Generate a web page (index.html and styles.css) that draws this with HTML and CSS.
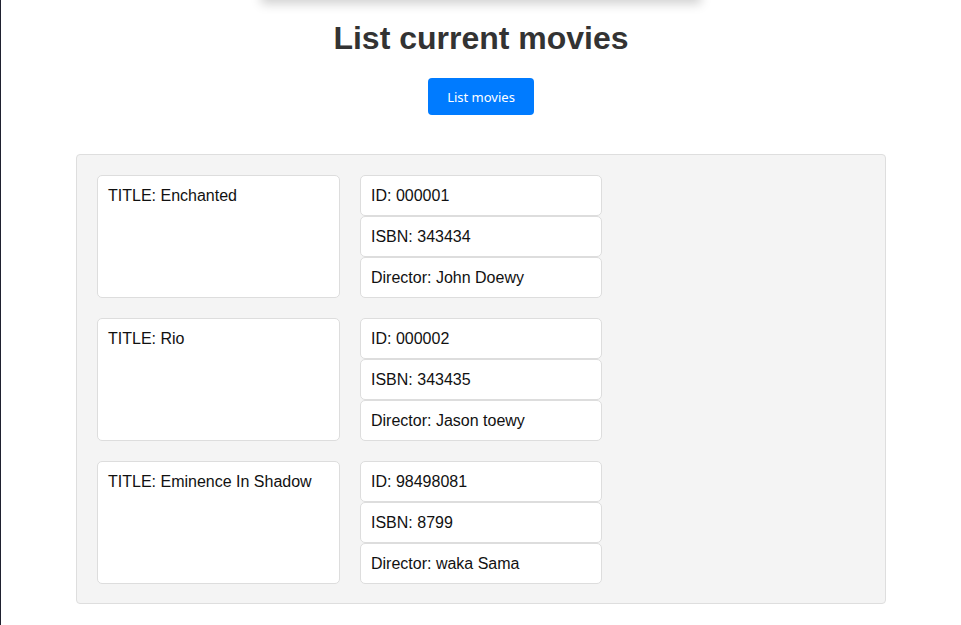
FILE: index.html
```html
<!DOCTYPE html>
<html lang="en">
<head>
<meta charset="utf-8">
<title>Movies</title>
<link rel="stylesheet" href="styles.css">
</head>
<body>
<div class="frame">
  <div class="topbar"></div>
  <h1 class="heading">List current movies</h1>
  <div class="actions">
    <button class="btn" type="button">List movies</button>
  </div>
  <div class="panel">
    <div class="movie">
      <div class="card title-card">TITLE: Enchanted</div>
      <div class="info">
        <div class="card">ID: 000001</div>
        <div class="card">ISBN: 343434</div>
        <div class="card">Director: John Doewy</div>
      </div>
    </div>
    <div class="movie">
      <div class="card title-card">TITLE: Rio</div>
      <div class="info">
        <div class="card">ID: 000002</div>
        <div class="card">ISBN: 343435</div>
        <div class="card">Director: Jason toewy</div>
      </div>
    </div>
    <div class="movie">
      <div class="card title-card">TITLE: Eminence In Shadow</div>
      <div class="info">
        <div class="card">ID: 98498081</div>
        <div class="card">ISBN: 8799</div>
        <div class="card">Director: waka Sama</div>
      </div>
    </div>
  </div>
</div>
</body>
</html>
```
FILE: styles.css
```css
html, body {
  margin: 0;
  padding: 0;
  background: #ffffff;
}
body {
  font-family: "Liberation Sans", Arial, sans-serif;
  overflow: hidden;
}
.frame {
  min-height: 625px;
  border-left: 1px solid #1f2130;
  box-sizing: border-box;
  display: flex;
  flex-direction: column;
  align-items: center;
}
.topbar {
  width: 440px;
  height: 40px;
  margin-top: -40px;
  background: #ffffff;
  box-shadow: 0 4px 10px rgba(0, 0, 0, 0.18);
}
.heading {
  margin: 20px 0 0;
  font-size: 32px;
  font-weight: bold;
  color: #333333;
  line-height: normal;
}
.actions {
  margin-top: 21px;
}
.btn {
  display: block;
  width: 106px;
  height: 37px;
  padding: 0;
  border: none;
  border-radius: 4px;
  background: #007bff;
  color: #ffffff;
  font-family: "Noto Sans", "Open Sans", sans-serif;
  font-size: 13px;
}
.panel {
  margin-top: 39px;
  width: 810px;
  box-sizing: border-box;
  background: #f4f4f4;
  border: 1px solid #dedede;
  border-radius: 4px;
  padding: 20px 20px 19px;
  display: flex;
  flex-direction: column;
  gap: 20px;
}
.movie {
  display: grid;
  grid-template-columns: 243px 242px;
  column-gap: 20px;
}
.info {
  display: flex;
  flex-direction: column;
}
.card {
  background: #ffffff;
  border: 1px solid #dddddd;
  border-radius: 5px;
  padding: 10px;
  font-size: 16px;
  line-height: 19px;
  color: #111111;
}
```
